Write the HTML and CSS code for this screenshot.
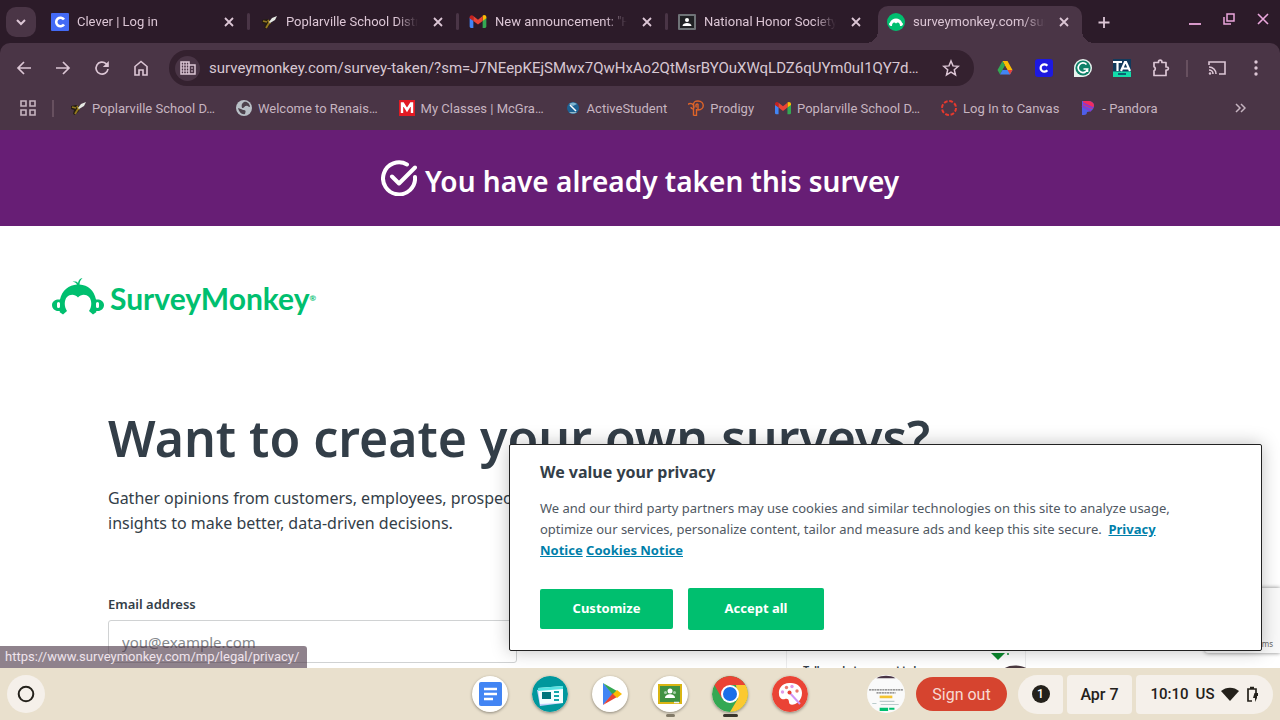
FILE: index.html
```html
<!DOCTYPE html>
<html lang="en">
<head>
    <meta charset="UTF-8">
    <meta name="viewport" content="width=device-width, initial-scale=1.0">
    <title>SurveyMonkey</title>
    <link rel="stylesheet" href="styles.css">
</head>
<body>
    <!-- Shared icons -->
    <svg class="sprite" aria-hidden="true">
        <symbol id="i-close" viewBox="0 0 16 16"><path d="M4 4l8 8M12 4l-8 8" fill="none" stroke="currentColor" stroke-width="1.800"/></symbol>
        <symbol id="i-bee" viewBox="0 0 16 16">
            <path d="M1 6l5-1 4 2-1 4-4 4-2-1 1-4-3-1z" fill="#241d12"/>
            <path d="M2 7l4 1M5 14l3-5M7 6l2 4" stroke="#94791f" stroke-width="1.800" fill="none"/>
            <path d="M8 8l3-4 5-2-2 4-5 3z" fill="#e6e9e4"/>
        </symbol>
        <symbol id="i-gmail" viewBox="0 0 18 14">
            <path d="M0 3v9.500a1.500 1.500 0 0 0 1.500 1.500H4V6z" fill="#4285f4"/>
            <path d="M18 3v9.500a1.500 1.500 0 0 1-1.500 1.500H14V6z" fill="#34a853"/>
            <path d="M14 1.500V6.500l4-3V2.500C18 .3 15.500-.6 14 .8z" fill="#fbbc04"/>
            <path d="M0 2.500v1l4 3V1C2.500-.6 0 .3 0 2.500z" fill="#c5221f"/>
            <path d="M4 1l5 4 5-4v5.500L9 10.300 4 6.500z" fill="#ea4335"/>
        </symbol>
        <symbol id="i-monkey" viewBox="0 0 52 37">
            <path d="M8 21.500C10 12 17 7 25 6.500c-1-2-2.500-2.500-4.500-2.500 3-1 5 0 5.500 1 .5-3 2-4.500 4.500-5-2 2-3 4-3 6.500C36 7 42 12 44 21.500c4-.5 8 1.500 8 5.500s-3.500 6.500-8 6l.5 1L41 36.500 37 33C40 29 40 22 37 19C34 16 29 16 26 19.500C23 16 18 16 15 19C12 22 12 29 15 33l-4 3.500L7.500 34l.5-1c-4.500.5-8-2-8-6s4-6 8-5.500z" fill="currentColor"/>
            <path d="M6.500 25.500v3M45.500 25.500v3" stroke="#fff" stroke-width="3" stroke-linecap="round"/>
        </symbol>
    </svg>

    <header class="browser">
        <div class="tabs">
            <button class="tab-search" aria-label="Search tabs">
                <svg viewBox="0 0 16 16" width="16" height="16"><path d="M4 6l4 4 4-4" fill="none" stroke="currentColor" stroke-width="2"/></svg>
            </button>
            <div class="tab">
                <button class="tab-title">
                    <svg viewBox="0 0 18 18" width="18" height="18"><rect width="18" height="18" rx="1" fill="#436af5"/><path d="M13 6.500A4.300 4.300 0 1 0 13 11.500" fill="none" stroke="#fff" stroke-width="2.600"/></svg>
                    <span>Clever | Log in</span>
                </button>
                <button class="tab-close" aria-label="Close tab"><svg><use href="#i-close"/></svg></button>
            </div>
            <div class="tab">
                <button class="tab-title"><svg width="16" height="16"><use href="#i-bee"/></svg><span>Poplarville School District</span></button>
                <button class="tab-close" aria-label="Close tab"><svg><use href="#i-close"/></svg></button>
            </div>
            <div class="tab">
                <button class="tab-title"><svg width="16" height="13"><use href="#i-gmail"/></svg><span>New announcement: "Hello</span></button>
                <button class="tab-close" aria-label="Close tab"><svg><use href="#i-close"/></svg></button>
            </div>
            <div class="tab">
                <button class="tab-title">
                    <svg viewBox="0 0 18 16" width="18" height="16"><rect width="18" height="16" rx="1" fill="#6f7377"/><rect x="2" y="2" width="14" height="12" fill="#202124"/><circle cx="9" cy="6" r="2" fill="#fff"/><path d="M4.500 12c0-4 9-4 9 0z" fill="#fff"/></svg>
                    <span>National Honor Society</span>
                </button>
                <button class="tab-close" aria-label="Close tab"><svg><use href="#i-close"/></svg></button>
            </div>
            <div class="tab active">
                <button class="tab-title">
                    <svg viewBox="0 0 18 18" width="18" height="18"><circle cx="9" cy="9" r="9" fill="#00bf6f"/><path d="M2 10.500c1.500-.2 1-4.500 7-5 6 .5 5.500 4.800 7 5 0 2-1 2.500-3 2.500 0-3-2-4.500-4-2.500-2-2-4-.5-4 2.500-2 0-3-.5-3-2.500z" fill="#fff"/></svg>
                    <span>surveymonkey.com/survey-taken</span>
                </button>
                <button class="tab-close" aria-label="Close tab"><svg><use href="#i-close"/></svg></button>
            </div>
            <button class="new-tab" aria-label="New tab">
                <svg viewBox="0 0 16 16" width="16" height="16"><path d="M8 3v11M2.500 8.500h11" stroke="currentColor" stroke-width="1.800"/></svg>
            </button>
            <div class="window-buttons">
                <button aria-label="Minimize"><svg viewBox="0 0 14 14"><path d="M1 12h12" stroke="currentColor" stroke-width="1.800"/></svg></button>
                <button aria-label="Restore"><svg viewBox="0 0 14 14"><path d="M5 2h7v7H5zM2 5v7h7" fill="none" stroke="currentColor" stroke-width="1.500"/></svg></button>
                <button aria-label="Close"><svg viewBox="0 0 14 14"><path d="M2 2l10 10M12 2L2 12" stroke="currentColor" stroke-width="1.600"/></svg></button>
            </div>
        </div>

        <div class="toolbar">
            <button aria-label="Back"><svg viewBox="0 0 16 16"><path d="M15 8H2M8 2L2 8l6 6" fill="none" stroke="currentColor" stroke-width="1.700"/></svg></button>
            <button aria-label="Forward"><svg viewBox="0 0 16 16"><path d="M1 8h13M8 2l6 6-6 6" fill="none" stroke="currentColor" stroke-width="1.700"/></svg></button>
            <button aria-label="Reload"><svg viewBox="0 0 16 16"><path d="M14 9A6 6 0 1 1 12 3.600L14 5.500" fill="none" stroke="currentColor" stroke-width="1.700"/><path d="M14.800 1v6h-6z" fill="currentColor"/></svg></button>
            <button aria-label="Home"><svg viewBox="0 0 16 16"><path d="M2 6.500L8 1.500l6 5V15h-4v-5H6v5H2z" fill="none" stroke="currentColor" stroke-width="1.600"/></svg></button>
            <div class="omnibox">
                <button class="site-info" aria-label="Site information">
                    <svg viewBox="0 0 16 16"><path d="M1 2h8v12H1zM9 5h6v9H9" fill="none" stroke="currentColor" stroke-width="1.500"/><path d="M1 5h8M1 8h8M1 11h8M3.700 2v12M6.300 2v12M11 8h2M11 11h2" stroke="currentColor"/></svg>
                </button>
                <input type="text" aria-label="Address" value="surveymonkey.com/survey-taken/?sm=J7NEepKEjSMwx7QwHxAo2QtMsrBYOuXWqLDZ6qUYm0uI1QY7dQx8LmT3vRk">
                <button class="star" aria-label="Bookmark"><svg viewBox="0 0 18 18"><path d="M9 2l2 4.900 5.300.4-4 3.500 1.200 5.200L9 13.200 4.500 16l1.200-5.200-4-3.500L7 6.900z" fill="none" stroke="currentColor" stroke-width="1.500"/></svg></button>
            </div>
            <button aria-label="Drive"><svg viewBox="0 0 16 16"><path d="M5.500 1h5l5 9h-5z" fill="#fbbc04"/><path d="M5.500 1L8 5.500 3 14.500.5 10z" fill="#34a853"/><path d="M5.500 10h10L13 14.500H3z" fill="#4285f4"/><path d="M10.500 10h5L13 14.500z" fill="#ea4335"/><path d="M8 6l2.300 4H5.700z" fill="#4a3546"/></svg></button>
            <button aria-label="Clever"><svg viewBox="0 0 18 18" class="big"><rect width="18" height="18" rx="3" fill="#1d19e0"/><path d="M12.300 6.800A3.700 3.700 0 1 0 12.300 11.200" fill="none" stroke="#fff" stroke-width="2.300"/></svg></button>
            <button aria-label="Grammarly"><svg viewBox="0 0 18 18" class="big"><path d="M0 18V9a9 9 0 1 1 9 9z" fill="#e8f3ef"/><circle cx="9" cy="9" r="7.600" fill="#0d8068"/><path d="M12.500 5.500A4.800 4.800 0 1 0 13.600 10H9.500M13.500 9.500V13" fill="none" stroke="#fff" stroke-width="1.700"/></svg></button>
            <button aria-label="TextAid"><svg viewBox="0 0 18 18" class="big"><rect width="18" height="18" fill="#123a5c"/><rect y="12.500" width="18" height="5.500" fill="#12dcaa"/><path d="M5 15h8" stroke="#0c6273" stroke-width="2"/><path d="M0 3h9M4.500 3v9M8 12l4-9h1l4 9M10 9.500h5" stroke="#fff" stroke-width="2.200" fill="none"/></svg></button>
            <button aria-label="Extensions"><svg viewBox="0 0 18 18" class="big"><path d="M2 3.500h4.500V2.800a1.700 1.700 0 0 1 3.400 0v.7H14V8h.8a1.600 1.600 0 0 1 0 3.200H14V16.500H2v-4.700a2.200 2.200 0 0 0 0-4z" fill="none" stroke="currentColor" stroke-width="1.700" stroke-linejoin="round"/></svg></button>
            <span class="divider"></span>
            <button aria-label="Cast"><svg viewBox="0 0 18 18" class="big"><path d="M1 6V3h16v12h-6M1 8a7 7 0 0 1 7 7M1 11a4 4 0 0 1 4 4" fill="none" stroke="currentColor" stroke-width="1.600"/><circle cx="2" cy="14.500" r="1.200" fill="currentColor"/></svg></button>
            <button aria-label="Menu"><svg viewBox="0 0 16 16"><g fill="currentColor"><circle cx="8" cy="2" r="1.700"/><circle cx="8" cy="8" r="1.700"/><circle cx="8" cy="14" r="1.700"/></g></svg></button>
        </div>

        <nav class="bookmarks">
            <button class="apps" aria-label="Apps"><svg viewBox="0 0 16 16" width="16" height="16"><path d="M1 1h5v5H1zM10 1h5v5h-5zM1 10h5v5H1zM10 10h5v5h-5z" fill="none" stroke="currentColor" stroke-width="1.600"/></svg></button>
            <span class="divider"></span>
            <a href="#"><svg><use href="#i-bee"/></svg>Poplarville School D…</a>
            <a href="#"><svg viewBox="0 0 16 16"><circle cx="8" cy="8" r="8" fill="#b9c0c7"/><path d="M8 2c3-1 6 2 6 5-2 0-2-2-4-1-2 0-1 2-4 2-1-3 0-5 2-6zM2 8c2 1 4 1 5 2 3 0 3 1 2 4-3 1-6-2-7-6z" fill="#4d424d"/></svg>Welcome to Renais…</a>
            <a href="#"><svg viewBox="0 0 16 16"><rect width="16" height="16" fill="#e21a23"/><path d="M3 13V3.500h1L8 10l4-6.500h1V13" fill="none" stroke="#fff" stroke-width="2.400"/></svg>My Classes | McGra…</a>
            <a href="#"><svg viewBox="0 0 16 16"><circle cx="8" cy="8" r="6" fill="#1d6193"/><path d="M4 4a6 6 0 0 1 8 0L8 6z" fill="#7db3cf"/><path d="M5 5l6 6" stroke="#fff" stroke-width="1.500"/><path d="M4 12a6 6 0 0 0 8 0" fill="#93b9ca"/></svg>ActiveStudent</a>
            <a href="#"><svg viewBox="0 0 16 16"><path d="M0 4.500C1 3 6 3 6 7c0 3-3 2-3 0M5.500 15.500V5C5.500 1 8 1 10 1c7 0 7 9 0 9V4.500C9 3 7 5 8.500 7.500M8.500 9v6.500h-3" fill="none" stroke="#df6428" stroke-width="1.400"/></svg>Prodigy</a>
            <a href="#"><svg><use href="#i-gmail"/></svg>Poplarville School D…</a>
            <a href="#"><svg viewBox="0 0 16 16"><circle cx="8" cy="8" r="7" fill="none" stroke="#e5392e" stroke-width="2" stroke-dasharray="3.800 1.700"/></svg>Log In to Canvas</a>
            <a href="#"><svg viewBox="0 0 16 16"><path d="M2 1h5c5 0 7 2 7 5s-3 6-7 6c0 2-1 3-3 3H2z" fill="#4f5ee8"/><path d="M3 1h4c5 0 7 2 7 5l-2 3-9-4z" fill="#f02d62"/><path d="M2 6l9 5M3 3l10 5" stroke="#8a38ce" stroke-width="1.500"/></svg>- Pandora</a>
            <button class="more" aria-label="More bookmarks"><svg viewBox="0 0 12 12" width="12" height="12"><path d="M2 2l4 4-4 4M7 2l4 4-4 4" fill="none" stroke="currentColor" stroke-width="1.500"/></svg></button>
        </nav>
    </header>

    <main class="page">
        <div class="banner">
            <svg viewBox="0 0 36 36" width="36" height="36"><path d="M26 4.500A16 16 0 1 0 34 17" fill="none" stroke="#fff" stroke-width="4" stroke-linecap="round"/><path d="M11 16.500l7 7L34 7.500" fill="none" stroke="#fff" stroke-width="4" stroke-linecap="round" stroke-linejoin="round"/></svg>
            <strong>You have already taken this survey</strong>
        </div>

        <a class="logo" href="#" aria-label="SurveyMonkey">
            <svg width="52" height="37"><use href="#i-monkey"/></svg>
            <span>SurveyMonkey</span><sup>®</sup>
        </a>

        <section class="signup">
            <h1>Want to create your own surveys?</h1>
            <div class="columns">
                <form>
                    <p>Gather opinions from customers, employees, prospects, and more. Get the insights to make better, data-driven decisions.</p>
                    <label for="email">Email address</label>
                    <input type="email" id="email" placeholder="you@example.com">
                </form>
                <aside class="preview">
                    <svg viewBox="0 0 60 30" width="60" height="30"><path d="M4 0h14l-7 7z" fill="#0a8a2f"/><circle cx="21" cy="1" r="1" fill="#0a8a2f"/><path d="M14 20c2-10 26-10 30 0z" fill="#4a3940"/></svg>
                    <b>Tell us what you want to learn</b>
                </aside>
            </div>
        </section>

        <div class="recaptcha">Privacy - Terms</div>

        <div class="cookies" role="dialog" aria-labelledby="cookies-title">
            <h2 id="cookies-title">We value your privacy</h2>
            <p>We and our third party partners may use cookies and similar technologies on this site to analyze usage, optimize our services, personalize content, tailor and measure ads and keep this site secure. &nbsp;<a href="#">Privacy Notice</a> <a href="#">Cookies Notice</a></p>
            <div class="cookie-buttons">
                <button>Customize</button>
                <button class="accept">Accept all</button>
            </div>
        </div>

        <div class="status">https://www.surveymonkey.com/mp/legal/privacy/</div>
    </main>

    <footer class="shelf">
        <button class="launcher" aria-label="Launcher"><svg viewBox="0 0 18 18" width="18" height="18"><circle cx="9" cy="9" r="7.300" fill="none" stroke="#24211b" stroke-width="2"/></svg></button>
        <div class="apps-row">
            <button aria-label="Docs"><svg viewBox="0 0 36 36"><circle cx="18" cy="18" r="18" fill="#fff"/><rect x="7" y="6" width="23" height="24" rx="2" fill="#4285f4"/><path d="M12 13h13M12 18h13M12 23h9" stroke="#fff" stroke-width="2.500"/></svg></button>
            <button aria-label="News"><svg viewBox="0 0 36 36"><circle cx="18" cy="18" r="18" fill="#00979d"/><path d="M5 14l24-3 2 16-23 3z" fill="#c3cdfb"/><path d="M6 12l25-2v17l-23 1z" fill="#f4feff"/><path d="M6 12l25-2v3L6 15z" fill="#55e3e3"/><path d="M10 16h9v7h-9z" fill="#00757c"/><path d="M22 16h5M22 20h5M22 24h5" stroke="#12a6aa" stroke-width="2"/></svg></button>
            <button aria-label="Play Store"><svg viewBox="0 0 36 36"><circle cx="18" cy="18" r="18" fill="#fff"/><path d="M11 7v22l10-11z" fill="#4285f4"/><path d="M11 7l14 8-4 4z" fill="#34a853"/><path d="M11 29l14-8-4-4z" fill="#ea4335"/><path d="M25 14l5 4-5 4-4-4z" fill="#fbbc04"/></svg></button>
            <button aria-label="Classroom" class="open"><svg viewBox="0 0 36 36"><circle cx="18" cy="18" r="18" fill="#fff"/><rect x="6" y="8" width="24" height="20" fill="#d9b514"/><rect x="8" y="10" width="20" height="16" fill="#3f9142"/><circle cx="18" cy="15" r="2.500" fill="#fff"/><path d="M13 22c0-5 10-5 10 0z" fill="#fff"/><g fill="#a5cda7"><circle cx="13.500" cy="16.500" r="1.500"/><circle cx="22.500" cy="16.500" r="1.500"/></g><path d="M22 26.500h5" stroke="#eee" stroke-width="1.500"/></svg></button>
            <button aria-label="Chrome" class="open current"><svg viewBox="0 0 36 36"><circle cx="18" cy="18" r="18" fill="#34a853"/><path d="M2.400 9A18 18 0 0 1 33.600 9H18L10 22.500z" fill="#ea4335"/><path d="M33.600 9A18 18 0 0 1 18 36l8-13.500L24 9z" fill="#fbc931"/><circle cx="18" cy="18" r="9" fill="#fff"/><circle cx="18" cy="18" r="7" fill="#1a6fe8"/></svg></button>
            <button aria-label="Canvas"><svg viewBox="0 0 36 36"><circle cx="18" cy="18" r="18" fill="#ea4335"/><path d="M19 7C11 6 6 12 7 18c0 4 3 6 6 5 2-1 4 0 4 3 0 6 13 2 13-9 0-6-5-10-11-10z" fill="#fff"/><path d="M17 16l11 12" stroke="#d095f5" stroke-width="2"/><circle cx="17.500" cy="16.500" r="2" fill="#ea4335"/><g fill="#df9be9"><circle cx="10.500" cy="16" r="1.700"/><circle cx="20" cy="10.500" r="1.700"/></g><g fill="#ec786d"><circle cx="14.500" cy="11.500" r="1.700"/><circle cx="25" cy="15" r="1.700"/></g></svg></button>
        </div>
        <div class="tray">
            <button class="avatar" aria-label="Window preview"><svg viewBox="0 0 36 36"><circle cx="18" cy="18" r="18" fill="#fafafa"/><path d="M9 3C14 0 22 0 27 3z" fill="#4a3546"/><path d="M2 14h32M9 17h18" stroke="#777" stroke-width="1.200" stroke-dasharray="2 .5"/><rect x="12" y="19.500" width="12" height="2.500" fill="#f4c430"/><path d="M12 25h14M13 28h17M5 27h4" stroke="#bcc" stroke-width="1"/><path d="M12 31h8v3h-8zM21 31h5v2h-5z" fill="#00bf6f"/></svg></button>
            <button class="signout">Sign out</button>
            <div class="tray-group">
                <button class="notify" aria-label="Notifications"><span>1</span></button>
                <button class="date">Apr 7</button>
                <button class="time">10:10 <span>US</span>
                    <svg viewBox="0 0 18 14" width="18" height="14"><path d="M0 4c5-4.500 13-4.500 18 0L9 14z" fill="#24211b"/></svg>
                    <svg viewBox="0 0 12 16" width="12" height="16"><path d="M6 15H2V3h8v4M4 1.500h4" fill="none" stroke="#24211b" stroke-width="1.700"/><path d="M8.500 7l3.500 0v3h-1v2l-2 4v-4H7z" fill="#24211b"/></svg>
                </button>
            </div>
        </div>
    </footer>
</body>
</html>
```

FILE: styles.css
```css
* {
    box-sizing: border-box;
}
body {
    display: flex;
    flex-direction: column;
    height: 100vh;
    margin: 0;
    overflow: hidden;
    font-family: Roboto, sans-serif;
    background-color: #fff;
}
button {
    display: flex;
    align-items: center;
    justify-content: center;
    flex: none;
    padding: 0;
    border: none;
    background: none;
    color: inherit;
    font: inherit;
    cursor: pointer;
}
svg {
    display: block;
    flex: none;
}
.sprite {
    position: absolute;
    width: 0;
    height: 0;
}

/* Browser window */
.browser {
    flex: none;
    background-color: #2c1b29;
    color: #dcc6d5;
}
.tabs {
    display: flex;
    align-items: center;
    height: 43px;
    padding: 0 6px;
    font-size: 13px;
}
.tab-search {
    width: 30px;
    height: 30px;
    margin-right: 6px;
    border-radius: 10px;
    background-color: #4a3546;
}
.tab {
    display: flex;
    align-items: center;
    flex: 0 1 209px;
    min-width: 0;
    padding: 0 14px 0 9px;
    position: relative;
}
.tab:not(.active):not(:nth-child(5))::after {
    content: "";
    position: absolute;
    right: 1px;
    width: 3px;
    height: 17px;
    border-radius: 2px;
    background-color: #4a3546;
}
.tab-title {
    flex: 1;
    min-width: 0;
    justify-content: flex-start;
    gap: 8px;
}
.tab-title svg {
    width: 18px;
}
.tab-title span {
    flex: 1;
    overflow: hidden;
    white-space: nowrap;
    text-align: left;
    -webkit-mask-image: linear-gradient(to right, #000 110px, transparent 132px);
    mask-image: linear-gradient(to right, #000 110px, transparent 132px);
}
.tab-close {
    margin-left: 10px;
}
.tab-close svg {
    width: 16px;
    height: 16px;
}
.tab.active {
    flex-basis: 204px;
    align-self: flex-end;
    height: 37px;
    margin-right: 12px;
    padding-right: 10px;
    padding-bottom: 6px;
    border-radius: 10px 10px 0 0;
    background-color: #4a3546;
}
.tab.active::before,
.tab.active::after {
    content: "";
    position: absolute;
    bottom: 0;
    width: 12px;
    height: 12px;
}
.tab.active::before {
    left: -12px;
    background: radial-gradient(circle at 0 0, transparent 12px, #4a3546 12px);
}
.tab.active::after {
    right: -12px;
    background: radial-gradient(circle at 100% 0, transparent 12px, #4a3546 12px);
}
.new-tab {
    width: 20px;
}
.window-buttons {
    display: flex;
    gap: 20px;
    margin-left: auto;
    padding: 0 4px 6px 0;
    color: #eba7dc;
}
.window-buttons svg {
    width: 14px;
    height: 14px;
}

.toolbar {
    display: flex;
    align-items: center;
    height: 50px;
    padding: 0 5px 0 4px;
    border-radius: 10px 10px 0 0;
    background-color: #4a3546;
}
.toolbar > button {
    width: 39px;
    height: 36px;
}
.toolbar svg {
    width: 16px;
    height: 16px;
}
.toolbar svg.big {
    width: 18px;
    height: 18px;
}
.divider {
    flex: none;
    width: 2px;
    height: 17px;
    margin: 0 9px 0 6px;
    background-color: #67505f;
}
.omnibox {
    display: flex;
    align-items: center;
    flex: 1;
    min-width: 0;
    height: 36px;
    margin: 0 11px 0 9px;
    padding: 0 14px 0 6px;
    border-radius: 18px;
    background-color: #34212f;
}
.omnibox input {
    flex: 1;
    min-width: 0;
    margin: 0 16px 0 9px;
    padding: 0;
    border: none;
    outline: none;
    background: none;
    color: #d8c8d3;
    font: 15px Roboto, sans-serif;
    text-overflow: ellipsis;
}
.site-info {
    width: 25px;
    height: 25px;
    border-radius: 50%;
    background-color: #4a3546;
}
.omnibox .star svg {
    width: 18px;
    height: 18px;
}

.bookmarks {
    display: flex;
    align-items: center;
    gap: 21px;
    height: 37px;
    padding: 0 34px 7px 20px;
    background-color: #4a3546;
    color: #c6b4c0;
    font-size: 13px;
}
.bookmarks .divider {
    margin: 0 -5px;
}
.bookmarks a {
    display: flex;
    align-items: center;
    gap: 6px;
    flex: none;
    color: inherit;
    text-decoration: none;
}
.bookmarks a svg {
    width: 16px;
    height: 16px;
}
.bookmarks .more {
    margin-left: auto;
}

/* Survey page */
.page {
    flex: 1;
    min-height: 0;
    position: relative;
    overflow: hidden;
    color: #333e48;
    font-family: "Noto Sans", sans-serif;
}
.banner {
    display: flex;
    align-items: center;
    justify-content: center;
    gap: 8px;
    height: 96px;
    background-color: #671e75;
    color: #fff;
    font-size: 28px;
}
.banner strong {
    padding-top: 6px;
    font-weight: 600;
}
.logo {
    display: flex;
    align-items: center;
    width: max-content;
    margin: 50px 0 0 52px;
    color: #00bf6f;
    font-family: Lato, sans-serif;
    font-size: 30px;
    font-weight: 700;
    line-height: 44px;
    text-decoration: none;
}
.logo svg {
    margin-bottom: 4px;
}
.logo span {
    margin-left: 6px;
}
.logo sup {
    font-size: 8px;
    line-height: 36px;
}
.signup {
    margin: 84px 108px 0;
}
.signup h1 {
    margin: 0;
    font-size: 50px;
    font-weight: 600;
    line-height: 68px;
    white-space: nowrap;
}
.columns {
    display: flex;
    justify-content: space-between;
}
.signup form {
    width: 600px;
}
.signup form p {
    margin: 14px 0 58px;
    font-size: 16px;
    line-height: 25px;
}
.signup label {
    display: block;
    margin-bottom: 6px;
    font-size: 13px;
    font-weight: 600;
    line-height: 20px;
}
.signup input {
    display: block;
    width: 409px;
    height: 43px;
    padding: 0 13px;
    border: 1px solid #d0d2d3;
    border-radius: 3px;
    color: #333e48;
    font: 15px "Noto Sans", sans-serif;
}
.signup input::placeholder {
    color: #85898d;
}
.preview {
    width: 240px;
    height: 240px;
    margin: 54px 146px 0 0;
    padding: 126px 0 0 16px;
    border: 1px solid #ededee;
    font-family: Roboto, sans-serif;
    font-size: 10px;
    line-height: 16px;
    white-space: nowrap;
}
.preview svg {
    margin: 0 0 -20px 184px;
}
.recaptcha {
    position: absolute;
    right: 0;
    bottom: 15px;
    width: 75px;
    height: 65px;
    padding: 50px 7px 0 0;
    border-radius: 3px 0 0 3px;
    background-color: #f9f9f9;
    box-shadow: 0 0 4px #808080;
    color: #666;
    font-size: 8px;
    line-height: 12px;
    text-align: right;
    white-space: nowrap;
}

/* Cookie dialog */
.cookies {
    position: absolute;
    right: 18px;
    bottom: 17px;
    width: 753px;
    padding: 15px 60px 20px 30px;
    border: 1px solid #222;
    border-radius: 2px;
    background-color: #fff;
    box-shadow: 0 0 18px rgba(0, 0, 0, 0.25);
}
.cookies h2 {
    margin: 0 0 14px;
    font-size: 16px;
    line-height: 24px;
}
.cookies p {
    margin: 0 0 27px;
    color: #4f5862;
    font-size: 13px;
    line-height: 21px;
}
.cookies a {
    color: #007faa;
    font-weight: 700;
}
.cookie-buttons {
    display: flex;
    align-items: center;
    gap: 15px;
}
.cookie-buttons button {
    width: 133px;
    height: 40px;
    padding-bottom: 3px;
    border-radius: 2px;
    background-color: #00bf6f;
    color: #fff;
    font-size: 13px;
    font-weight: 700;
}
.cookie-buttons .accept {
    width: 136px;
    height: 42px;
}
.status {
    position: absolute;
    left: 0;
    bottom: 0;
    padding: 0 8px 0 5px;
    border-radius: 0 3px 0 0;
    background-color: rgba(74, 53, 70, 0.62);
    color: #f0e4ec;
    font: 13px/22px Roboto, sans-serif;
}

/* Shelf */
.shelf {
    display: grid;
    grid-template-columns: 1fr auto 1fr;
    align-items: center;
    flex: none;
    height: 52px;
    padding: 0 7px;
    background-color: #e9e0cd;
    color: #24211b;
}
.launcher {
    width: 38px;
    height: 38px;
    border-radius: 50%;
    background-color: #f5f0ea;
}
.apps-row {
    display: flex;
    gap: 24px;
}
.apps-row button {
    position: relative;
}
.apps-row svg {
    width: 36px;
    height: 36px;
    border-radius: 50%;
    box-shadow: 0 1px 3px rgba(0, 0, 0, 0.4);
}
.apps-row .open::after {
    content: "";
    position: absolute;
    bottom: -5px;
    width: 9px;
    height: 3px;
    border-radius: 2px;
    background-color: #827a68;
}
.apps-row .current::after {
    width: 15px;
    background-color: #39352c;
}
.tray {
    display: flex;
    align-items: center;
    justify-content: flex-end;
    gap: 11px;
    font-size: 16px;
    font-weight: 500;
}
.avatar svg {
    width: 38px;
    height: 38px;
}
.signout {
    width: 91px;
    height: 34px;
    border-radius: 17px;
    background-color: #d6442f;
    color: #f7dad3;
    font-weight: 400;
}
.tray-group {
    display: flex;
    gap: 4px;
}
.tray-group button {
    height: 39px;
    border-radius: 4px;
    background-color: #f5f0ea;
}
.tray-group .notify {
    width: 45px;
    border-radius: 20px 4px 4px 20px;
}
.notify span {
    width: 18px;
    border-radius: 50%;
    background-color: #24211b;
    color: #fff;
    font-size: 12px;
    line-height: 18px;
}
.tray-group .date {
    width: 65px;
}
.tray-group .time {
    gap: 7px;
    width: 137px;
    border-radius: 4px 20px 20px 4px;
    font-size: 15px;
}
```
